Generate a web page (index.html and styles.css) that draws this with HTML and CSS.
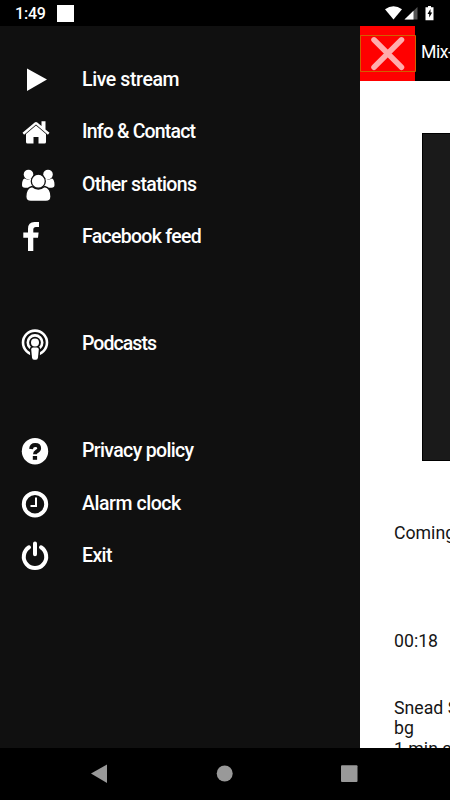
FILE: index.html
```html
<!DOCTYPE html>
<html lang="en">
  <head>
    <meta charset="UTF-8" />
    <meta name="viewport" content="width=device-width, initial-scale=1.0" />
    <title>Mix</title>
    <link rel="stylesheet" href="styles.css">
  </head>
  <body>
    <div class="screen">
      <header class="status">
        <span class="time">1:49</span>
        <span class="notice"></span>
        <svg class="signals" width="54" height="16" viewBox="0 0 54 16">
          <path fill="#fff" d="M0 3.2Q8.500-2.600 17 3.200L8.500 13.500z" />
          <path fill="#555" d="M32.500 1v12.500H19.500z" />
          <path fill="#fff" d="M28.500 4.800v8.700h-9z" />
          <path fill="#fff" d="M40.500 1.300h2.500V0h3v1.300h2.500v13h-8z" />
          <path fill="#000" d="M45.500 3l-3 5h1.700v3.500l3-5h-1.700z" />
        </svg>
      </header>

      <main class="app">
        <nav class="drawer">
          <ul class="group">
            <li class="item">
              <svg class="icon" viewBox="0 0 40 40"><path d="M12 8.500v22.500l20-11.500z" /></svg>
              <span class="label live">Live stream</span>
            </li>
            <li class="item">
              <svg class="icon" viewBox="0 0 40 40">
                <path d="M11 22l10-8.400L31 22v8q0 1.500-1.500 1.500H23.500v-6.500h-5v6.500H12.500Q11 31.500 11 30z" />
                <path d="M7.500 20.800L19.700 10.500q1.300-1 2.600 0l4.200 3.500V9.300h4v8.100l4 3.400-1.600 1.900L21 12.400 9.100 22.700z" />
              </svg>
              <span class="label info">Info &amp; Contact</span>
            </li>
            <li class="item">
              <svg class="icon" viewBox="0 0 40 40">
                <circle cx="13.500" cy="9.500" r="4.800" />
                <circle cx="33" cy="9.500" r="4.800" />
                <path d="M9.500 13.500Q7 14.500 7 20q0 2.800 3 2.800h8V15l-2-1.500q-3 2-6.500 0z" />
                <path d="M37 13.500q2.500 1 2.500 6.500 0 2.800-3 2.800h-8V15l2-1.500q3 2 6.500 0z" />
                <path class="cut" d="M17 21.500q6.300 5 12.600 0 6.400 1.500 6.400 10 0 5-5 5H15.800q-5 0-5-5 0-8.500 6.200-10z" />
                <circle class="cut" cx="23.300" cy="16.200" r="7" />
              </svg>
              <span class="label other">Other stations</span>
            </li>
            <li class="item">
              <svg class="icon" viewBox="0 0 40 40"><path d="M13 34v-13.300H8.300v-5.200H13v-3.700q0-6.800 6.500-6.800h4.500v5h-3q-2.700 0-2.700 2.600v2.900h5.300l-.6 5.200h-4.700V34z" /></svg>
              <span class="label feed">Facebook feed</span>
            </li>
          </ul>
          <ul class="group">
            <li class="item">
              <svg class="icon" viewBox="0 0 40 40">
                <circle class="ring" cx="20" cy="18.600" r="12" />
                <circle class="ring" cx="20" cy="18.600" r="7.200" />
                <path class="gap" d="M15.500 36l-.8-11q0-2.200 2.500-2.200h5.600q2.500 0 2.500 2.200l-.8 11z" />
                <circle cx="20" cy="18.600" r="4" />
                <path d="M16.200 25.500q0-2 2-2h3.600q2 0 2 2l-.8 8q-.3 2.200-2 2.200h-2q-1.700 0-2-2.200z" />
              </svg>
              <span class="label pods">Podcasts</span>
            </li>
          </ul>
          <ul class="group">
            <li class="item">
              <svg class="icon" viewBox="0 0 40 40">
                <circle cx="20" cy="20.200" r="13.200" />
                <path class="mark" d="M16 18q.4-4 4.200-4 4 0 4 3.300 0 2-2.500 3.200-1.800 1-1.800 2.800" />
                <path class="gap" d="M17.800 25h4.300v3.800h-4.300z" />
              </svg>
              <span class="label privacy">Privacy policy</span>
            </li>
            <li class="item">
              <svg class="icon" viewBox="0 0 40 40">
                <circle class="dial" cx="20" cy="20.200" r="11.200" />
                <path class="hand" d="M21 13.500V22h-5.500" />
              </svg>
              <span class="label alarm">Alarm clock</span>
            </li>
            <li class="item">
              <svg class="icon" viewBox="0 0 40 40">
                <path class="power" d="M14 11.300a11.200 11.200 0 1 0 12 0M20 7.500v10.800" />
              </svg>
              <span class="label exit">Exit</span>
            </li>
          </ul>
        </nav>

        <section class="page">
          <div class="toolbar">
            <div class="close">
              <svg width="56" height="55" viewBox="0 0 56 55">
                <path class="frame" d="M.5 9.500h55v36H.5z" />
                <path class="cross" d="M14 13.800l27.500 27.500M41.500 13.800L14 41.300" />
              </svg>
            </div>
            <span class="title">Mix-</span>
          </div>
          <div class="cover"></div>
          <p class="coming">Coming</p>
          <p class="clock">00:18</p>
          <p class="song">Snead S<br>bg<br>1 min a</p>
        </section>
      </main>

      <footer class="navbar">
        <svg width="450" height="52" viewBox="0 0 450 52">
          <path d="M91 25.500L107 16.500v18.500z" />
          <circle cx="224.700" cy="25.500" r="8" />
          <rect x="341" y="17.200" width="16.500" height="16.800" rx="1" />
        </svg>
      </footer>
    </div>
  </body>
</html>
```

FILE: styles.css
```css
* {
  margin: 0;
  padding: 0;
  box-sizing: border-box;
}
body {
  background: #000;
  font-family: Roboto, "Liberation Sans", sans-serif;
}
.screen {
  display: flex;
  flex-direction: column;
  width: 450px;
  height: 800px;
  overflow: hidden;
}
.status {
  display: flex;
  height: 26px;
  padding: 5px 15px 0;
  color: #fff;
}
.time {
  width: 42px;
  font-size: 16px;
  font-weight: 500;
  letter-spacing: -0.2px;
  line-height: 18px;
}
.notice {
  width: 17px;
  height: 17px;
  background: #fff;
}
.signals {
  margin: 1px -4px 0 auto;
}
.app {
  display: flex;
  height: 722px;
  overflow: hidden;
}
.drawer {
  display: flex;
  flex: none;
  flex-direction: column;
  gap: 54.5px;
  width: 360px;
  padding: 27.4px 0 0 15px;
  background: #101010;
}
.group {
  list-style: none;
}
.item {
  display: flex;
  align-items: center;
  height: 52.5px;
}
.icon {
  width: 40px;
  height: 40px;
  margin-right: 27px;
  fill: #fff;
}
.cut {
  stroke: #101010;
  stroke-width: 1.3;
}
.gap {
  fill: #101010;
}
.ring,
.dial,
.power,
.hand {
  fill: none;
  stroke: #fff;
  stroke-width: 2.6;
}
.dial,
.power {
  stroke-width: 4;
}
.power {
  stroke-linecap: round;
}
.hand {
  stroke-width: 2;
}
.mark {
  fill: none;
  stroke: #101010;
  stroke-width: 3.8;
}
.label {
  color: #fff;
  font-size: 19.5px;
  font-weight: 500;
  line-height: 24px;
  white-space: nowrap;
}
.live {
  letter-spacing: -0.4px;
}
.info {
  letter-spacing: -0.83px;
}
.other,
.privacy {
  letter-spacing: -0.65px;
}
.feed {
  letter-spacing: -0.7px;
}
.pods {
  letter-spacing: -0.95px;
}
.alarm {
  letter-spacing: -0.45px;
}
.exit {
  letter-spacing: -0.6px;
}
.page {
  flex: none;
  width: 90px;
  height: 722px;
  overflow: hidden;
  background: #fff;
  color: #151515;
  font-size: 17.7px;
  line-height: 20.5px;
  white-space: nowrap;
}
.toolbar {
  display: flex;
  height: 55px;
  background: #000;
}
.close {
  flex: none;
  width: 55px;
  background: #f00;
}
.frame {
  fill: none;
  stroke: #d06000;
}
.cross {
  fill: none;
  stroke: #ffacac;
  stroke-width: 5.5;
  stroke-linecap: round;
}
.title {
  padding-left: 6px;
  color: #fff;
  letter-spacing: -0.5px;
  line-height: 53px;
}
.cover {
  height: 328px;
  margin: 52px 0 0 62px;
  border: 1px solid #000;
  border-right: 0;
  background: #1a1a1a;
}
.page p {
  padding-left: 34px;
}
.coming {
  margin-top: 62px;
}
.clock {
  margin-top: 87.5px;
}
.song {
  margin-top: 46px;
}
.navbar {
  height: 52px;
  fill: #999;
}
```
